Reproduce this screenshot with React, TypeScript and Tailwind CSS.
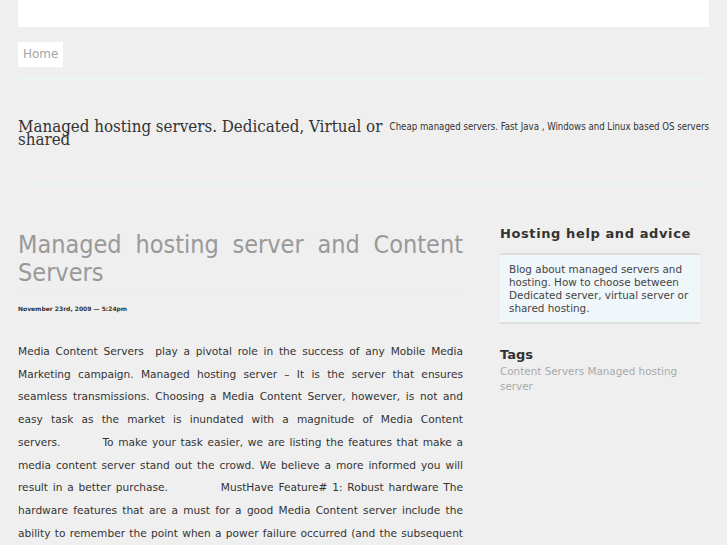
import React from 'react';

const body =
  'Media Content Servers\u00a0 play a pivotal role in the success of any Mobile Media Marketing campaign. Managed hosting server \u2013 It is the server that ensures seamless transmissions. Choosing a Media Content Server, however, is not and easy task as the market is inundated with a magnitude of Media Content servers.\u00a0\u00a0\u00a0\u00a0\u00a0\u00a0\u00a0\u00a0 To make your task easier, we are listing the features that make a media content server stand out the crowd. We believe a more informed you will result in a better purchase.\u00a0\u00a0\u00a0\u00a0\u00a0\u00a0\u00a0\u00a0\u00a0\u00a0 MustHave Feature# 1: Robust hardware The hardware features that are a must for a good Media Content server include the ability to remember the point when a power failure occurred (and the subsequent restart from that point) and a storage that can hold many terabytes of media content.';

const App: React.FC = () => {
  return (
    <div className="min-h-screen bg-[#efefef] font-['DejaVu_Sans',sans-serif] text-[#333]">
      <div className="mx-[18px]">
        <div className="h-[27px] bg-white" />

        <nav className="mt-[15px] flex">
          <a className="bg-white px-[5px] h-[25px] leading-[25px] text-[12px] text-[#a5a5a5]">Home</a>
        </nav>

        <div className="mt-[10px] h-[2px] bg-[#eaf5f7]" />

        <header className="mt-[41px] flex items-start">
          <h1 className="min-w-0 flex-1 font-['DejaVu_Serif_Condensed',serif] text-[16.8px] leading-[13px] text-[#333]">
            Managed hosting servers. Dedicated, Virtual or shared
          </h1>
          <p className="ml-[5px] shrink-0 whitespace-nowrap font-['DejaVu_Sans_Condensed',sans-serif] text-[9.6px] leading-[13px] text-[#333]">
            Cheap managed servers. Fast Java , Windows and Linux based OS servers
          </p>
        </header>

        <div className="mt-[37px] h-[2px] bg-[#eaf5f7]" />

        <div className="mt-[46px] flex justify-between">
          <main className="w-[445px]">
            <h2 className="text-justify font-['DejaVu_Sans_Condensed',sans-serif] text-[25px] leading-[28px] text-[#999]">
              Managed hosting server and Content Servers
            </h2>
            <div className="mt-[2px] h-[1px] bg-[#e6eff3]" />
            <div className="mt-[15px] text-[6px] font-bold leading-[8px] text-[#333]">
              November 23rd, 2009 — 5:24pm
            </div>
            <p className="mt-[27px] text-justify text-[10.6px] leading-[22.7px] text-[#333]">{body}</p>
          </main>

          <aside className="w-[200px] mr-[9px] mt-[-5px]">
            <h3 className="text-[13px] font-bold tracking-[0.6px] leading-[16px] text-[#333]">
              Hosting help and advice
            </h3>
            <div className="mt-[11px] border-y-2 border-[#dddddd] bg-[#f0f7fa] px-[9px] pt-[8px] pb-[7px] text-[10.4px] leading-[13px] text-[#444]">
              Blog about managed servers and hosting. How to choose between Dedicated server, virtual server or shared hosting.
            </div>
            <h3 className="mt-[23px] text-[13px] font-bold leading-[16px] text-[#333]">Tags</h3>
            <div className="mt-[1px] text-[10.4px] leading-[15px] text-[#aaa]">
              <a>Content Servers</a> <a>Managed hosting server</a>
            </div>
          </aside>
        </div>
      </div>
    </div>
  );
};

export default App;
